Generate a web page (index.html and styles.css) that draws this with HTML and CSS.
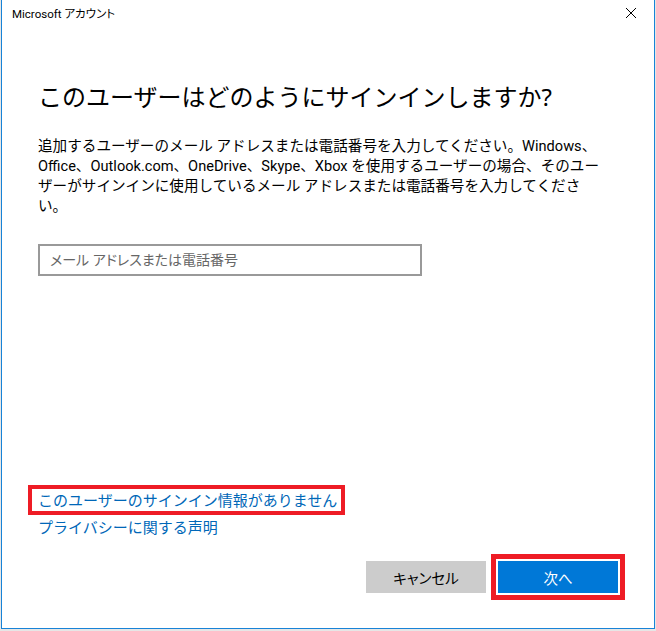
FILE: index.html
```html
<!DOCTYPE html>
<html lang="ja">
<head>
<meta charset="utf-8">
<link rel="stylesheet" href="styles.css">
</head>
<body>
<div class="window">
  <div class="titlebar">
    <span class="title">Microsoft アカウント</span>
    <span class="close">
      <svg width="12" height="12" viewBox="0 0 12 12"><path d="M1 1 L11 11 M11 1 L1 11" stroke="#000" stroke-width="1" fill="none"/></svg>
    </span>
  </div>
  <div class="content">
    <h1 class="heading">このユーザーはどのようにサインインしますか?</h1>
    <p class="desc">追加するユーザーのメール アドレスまたは電話番号を入力してください。Windows、<br>Office、Outlook.com、OneDrive、Skype、Xbox を使用するユーザーの場合、そのユー<br>ザーがサインインに使用しているメール アドレスまたは電話番号を入力してくださ<br>い。</p>
    <div class="input">メール アドレスまたは電話番号</div>
    <div class="spacer"></div>
    <div class="links">
      <span class="mark"><a class="link">このユーザーのサインイン情報がありません</a></span>
      <a class="link second">プライバシーに関する声明</a>
    </div>
  </div>
  <div class="footer">
    <button class="btn cancel">キャンセル</button>
    <button class="btn primary">次へ</button>
  </div>
</div>
</body>
</html>
```
FILE: styles.css
```css
html, body {
  margin: 0;
  padding: 0;
}
body {
  background: #e6e6e6;
  width: 656px;
  height: 631px;
  overflow: hidden;
  font-family: "Noto Sans", "Noto Sans CJK JP", sans-serif;
}
.window {
  margin-left: 1px;
  width: 652px;
  height: 628px;
  background: #fff;
  border: 1px solid #1883d7;
  border-top: none;
  display: flex;
  flex-direction: column;
}
.titlebar {
  height: 28px;
  display: flex;
  align-items: center;
  justify-content: space-between;
  padding: 0 17px 0 10px;
}
.title {
  font-family: Roboto, "Noto Sans CJK JP", sans-serif;
  font-feature-settings: "palt";
  font-size: 11.5px;
  color: #000;
  margin-top: -2px;
}
.close {
  display: flex;
  margin-top: -2px;
}
.content {
  flex: 1;
  display: flex;
  flex-direction: column;
  padding: 0 36px;
}
.heading {
  margin: 52px 0 0;
  font-size: 24px;
  font-weight: 400;
  line-height: 34px;
  color: #000;
}
.desc {
  margin: 22px 0 0;
  width: 592px;
  white-space: nowrap;
  font-family: Roboto, "Noto Sans CJK JP", sans-serif;
  font-size: 14.6px;
  line-height: 20px;
  color: #000;
}
.input {
  margin-top: 28px;
  height: 28px;
  border: 2px solid #999;
  box-sizing: content-box;
  font-size: 14px;
  font-feature-settings: "palt";
  line-height: 28px;
  color: #666;
  padding-left: 10px;
  width: 370px;
}
.spacer {
  flex: 1;
}
.links {
  display: flex;
  flex-direction: column;
  align-items: flex-start;
  margin-bottom: 24px;
}
.mark {
  display: inline-block;
  border: 4px solid #ee1c25;
  padding: 0 4px 0 6px;
  margin-left: -10px;
}
.link {
  font-size: 15px;
  line-height: 20px;
  color: #0067b8;
}
.second {
  margin-top: 2px;
}
.footer {
  display: flex;
  justify-content: flex-end;
  gap: 12px;
  padding: 0 36px 35px 0;
}
.btn {
  width: 120px;
  height: 32px;
  border: none;
  font-family: "Noto Sans", "Noto Sans CJK JP", sans-serif;
  font-size: 14.5px;
  padding: 0;
}
.cancel {
  background: #cccccc;
  color: #000;
  font-feature-settings: "palt";
}
.primary {
  background: #0078d7;
  color: #fff;
  outline: 5px solid #ee1c25;
  outline-offset: 2px;
  box-shadow: 0 0 0 2px #fff;
}
```
